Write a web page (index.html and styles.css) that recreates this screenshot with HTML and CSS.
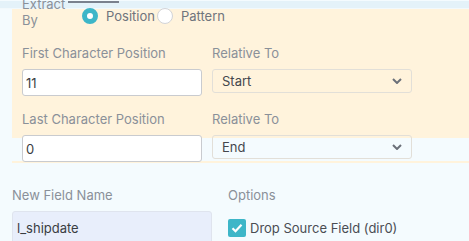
FILE: index.html
```html
<!DOCTYPE html>
<html lang="en">
<head>
  <meta charset="UTF-8" />
  <title>Substring Field</title>
  <link rel="stylesheet" href="styles.css">
</head>
<body>
  <div class="tabbar"><span class="tab-indicator"></span></div>
  <section class="extract">
    <div class="panel">
      <div class="extract-by">
        <span class="label by-label">Extract By</span>
        <label class="radio"><span class="radio-dot checked"></span>Position</label>
        <label class="radio"><span class="radio-dot"></span>Pattern</label>
      </div>
      <div class="field-row first">
        <div class="field col-left">
          <label class="label" for="firstPos">First Character Position</label>
          <input class="text-input" id="firstPos" value="11" />
        </div>
        <div class="field col-right">
          <span class="label">Relative To</span>
          <div class="select">Start
            <svg class="chevron" width="10" height="6" viewBox="0 0 10 6"><path d="M1 1l4 4 4-4" fill="none" stroke="#6b7079" stroke-width="2"/></svg>
          </div>
        </div>
      </div>
      <div class="field-row second">
        <div class="field col-left">
          <label class="label" for="lastPos">Last Character Position</label>
          <input class="text-input" id="lastPos" value="0" />
        </div>
        <div class="field col-right">
          <span class="label">Relative To</span>
          <div class="select">End
            <svg class="chevron" width="10" height="6" viewBox="0 0 10 6"><path d="M1 1l4 4 4-4" fill="none" stroke="#6b7079" stroke-width="2"/></svg>
          </div>
        </div>
      </div>
    </div>
  </section>
  <div class="output-row">
    <div class="field">
      <label class="label" for="newName">New Field Name</label>
      <input class="text-input filled" id="newName" value="l_shipdate" />
    </div>
    <div class="field">
      <span class="label">Options</span>
      <label class="check">
        <span class="check-box">
          <svg width="12" height="10" viewBox="0 0 12 10"><path d="M1.5 5.2l3 3 6-6.4" fill="none" stroke="#fff" stroke-width="2.2"/></svg>
        </span>
        Drop Source Field (dir0)
      </label>
    </div>
  </div>
</body>
</html>
```

FILE: styles.css
```css
:root {
  --teal: #3db6c8;
  --beige: #fff3dc;
  --bg: #f4fbfe;
  --label: #8a9099;
  --text: #3a3d42;
}
* { box-sizing: border-box; }
body {
  margin: 0;
  background: var(--bg);
  font-family: 'Inter', sans-serif;
  font-size: 13px;
  color: var(--text);
  overflow: hidden;
}
.tabbar {
  height: 8px;
  background: #e4f2f9;
  border-bottom: 1px solid #f2f9fc;
}
.tab-indicator {
  display: block;
  margin: 1px 0 0 68px;
  width: 51px;
  height: 2px;
  background: #7a818d;
}
.extract {
  margin-left: 12px;
  padding-bottom: 23px;
  border-bottom: 2px solid var(--beige);
}
.panel {
  display: flow-root;
  height: 129px;
  padding: 0 10px;
  background: var(--beige);
}
.label {
  display: block;
  line-height: 16px;
  color: var(--label);
}
.extract-by {
  display: flex;
  align-items: flex-start;
  margin-top: -13px;
}
.by-label { width: 55px; margin-right: 5px; }
.radio {
  display: flex;
  align-items: center;
  gap: 8px;
  margin-top: 12px;
  height: 16px;
  color: #6f747c;
}
.radio-dot {
  width: 16px;
  height: 16px;
  border-radius: 50%;
  background: #fff;
  border: 1px solid #d2d4d8;
}
.radio-dot.checked { border: 5px solid var(--teal); }
.radio + .radio { margin-left: 2px; }
.field-row {
  display: flex;
  gap: 10px;
  margin-top: 17px;
}
.field-row.second { margin-top: 15px; }
.field .label { margin-bottom: 8px; }
.col-left { width: 180px; }
.col-right { width: 200px; }
.text-input {
  display: block;
  width: 100%;
  height: 27px;
  padding: 0 3px;
  border: 1px solid #c9cbcf;
  border-radius: 3px;
  background: #fff;
  font-family: inherit;
  font-size: 13px;
  color: var(--text);
}
.select {
  display: flex;
  align-items: center;
  justify-content: space-between;
  height: 24px;
  padding: 0 9px;
  border: 1px solid #e2dfd8;
  border-radius: 3px;
  color: #44474d;
}
.output-row {
  display: grid;
  grid-template-columns: 200px 1fr;
  gap: 16px;
  margin: 24px 0 0 12px;
}
.text-input.filled {
  height: 33px;
  padding: 0 4px;
  background: #e8eefb;
  border-color: #dfe4ee;
}
.check {
  display: flex;
  align-items: center;
  gap: 4px;
  height: 33px;
  color: #4a4d53;
}
.check-box {
  display: flex;
  align-items: center;
  justify-content: center;
  width: 18px;
  height: 18px;
  border-radius: 2px;
  background: var(--teal);
}
```
